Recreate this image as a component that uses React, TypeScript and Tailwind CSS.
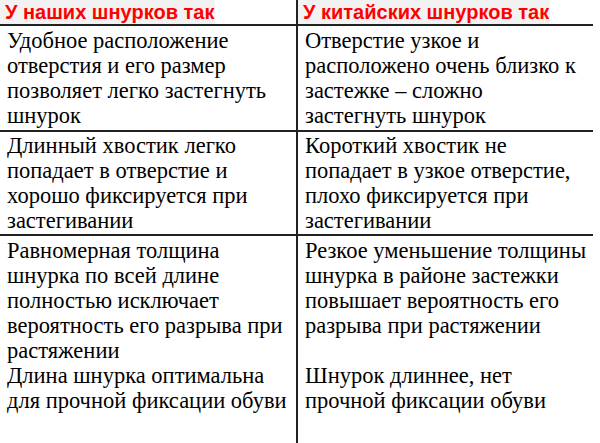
import React from "react";

function Cell({ lines }: { lines: string[] }) {
  return (
    <div className="pl-[7px] text-[22.5px] leading-[25px] text-black font-['Liberation_Serif','Times_New_Roman',serif]">
      {lines.map((l, i) => (
        <div key={i} className="h-[25px] whitespace-nowrap">
          {l || "\u00a0"}
        </div>
      ))}
    </div>
  );
}

export default function App() {
  const rows: { l: string[]; r: string[]; pad: string }[] = [
    {
      l: ["Удобное расположение", "отверстия и его размер", "позволяет легко застегнуть", "шнурок"],
      r: ["Отверстие узкое и", "расположено очень близко к", "застежке – сложно", "застегнуть шнурок"],
      pad: "pt-[2px] pb-[2px]",
    },
    {
      l: ["Длинный хвостик легко", "попадает в отверстие и", "хорошо фиксируется при", "застегивании"],
      r: ["Короткий хвостик не", "попадает в узкое отверстие,", "плохо фиксируется при", "застегивании"],
      pad: "pt-[1px] pb-[1px]",
    },
    {
      l: [
        "Равномерная толщина",
        "шнурка по всей длине",
        "полностью исключает",
        "вероятность его разрыва при",
        "растяжении",
        "Длина шнурка оптимальна",
        "для прочной фиксации обуви",
        "",
      ],
      r: [
        "Резкое уменьшение толщины",
        "шнурка в районе застежки",
        "повышает вероятность его",
        "разрыва при растяжении",
        "",
        "Шнурок длиннее, нет",
        "прочной фиксации обуви",
        "",
      ],
      pad: "pt-[2px] pb-[5px]",
    },
  ];

  return (
    <div className="w-[600px] h-[443px] bg-white overflow-hidden">
      <div className="w-[593px]">
        <div className="grid grid-cols-[298px_295px] border-b-2 border-[#222] h-[26px]">
          <div className="border-r-2 border-[#222] h-[24px]">
            <span className="inline-block h-[24px] bg-[#f2f2f2] pl-[5px] pr-[1px] text-[20px] leading-[24px] font-bold text-[#ff0000] whitespace-nowrap font-['Liberation_Sans',Arial,sans-serif]">
              У наших шнурков так
            </span>
          </div>
          <div className="h-[24px]">
            <span className="inline-block h-[24px] bg-[#f2f2f2] pl-[5px] pr-[1px] text-[20px] leading-[24px] font-bold text-[#ff0000] whitespace-nowrap font-['Liberation_Sans',Arial,sans-serif]">
              У китайских шнурков так
            </span>
          </div>
        </div>
        {rows.map((row, i) => (
          <div key={i} className="grid grid-cols-[298px_295px] border-b-2 border-[#222]">
            <div className={"border-r-2 border-[#222] " + row.pad}>
              <Cell lines={row.l} />
            </div>
            <div className={row.pad}>
              <Cell lines={row.r} />
            </div>
          </div>
        ))}
      </div>
    </div>
  );
}
